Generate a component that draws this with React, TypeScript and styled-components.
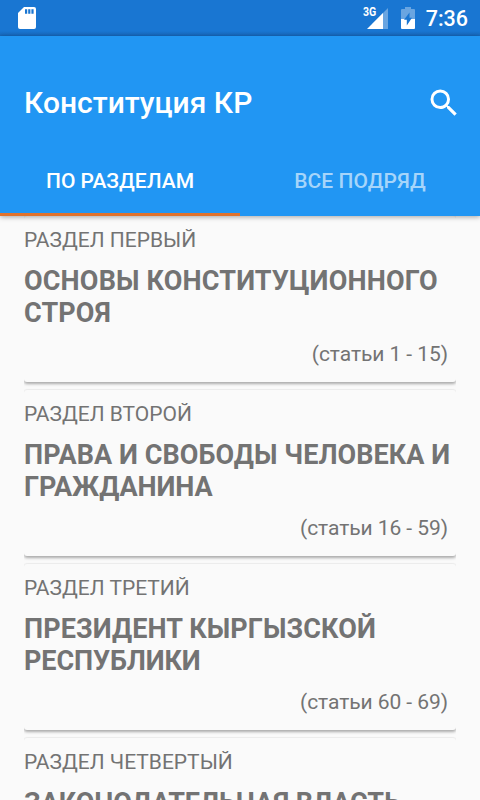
import React from "react";
import styled, { createGlobalStyle } from "styled-components";

const Global = createGlobalStyle`
  * { box-sizing: border-box; }
  html, body { margin: 0; height: 800px; overflow: hidden; background: #fafafa; }
  body { font-family: Roboto, sans-serif; }
`;
const Screen = styled.div`
  width: 480px; height: 800px; display: flex; flex-direction: column; overflow: hidden; background: #fafafa;
`;
const StatusBar = styled.div`
  height: 36px; flex: none; color: #fff;
  background: linear-gradient(#1976d2 0 31px, #1769bd 36px);
  display: flex; align-items: center; justify-content: space-between;
  padding: 0 12px 0 18px;
`;
const StatusGroup = styled.div`
  display: flex; align-items: center; height: 36px;
`;
const Network = styled.span`
  font-size: 12px; font-weight: 700; line-height: 14px; align-self: flex-start; margin: 5px -11px 0 0;
  transform: scale(0.88, 1.08); transform-origin: left center; letter-spacing: -0.1px;
`;
const SignalIcon = styled.svg`
  margin-right: 13px;
`;
const Clock = styled.span`
  font-size: 21.5px; font-weight: 500; line-height: 36px; margin-left: 11px; padding-top: 1px;
`;
const Header = styled.header`
  height: 180px; flex: none; background: #2196f3; color: #fff; box-shadow: 0 1px 5px rgba(0,0,0,.35); z-index: 1;
  display: flex; flex-direction: column;
`;
const Toolbar = styled.div`
  height: 108px; padding: 25px 18px 0 24px; display: flex; align-items: center; justify-content: space-between;
`;
const Title = styled.h1`
  margin: 0; font-size: 30px; font-weight: 500; line-height: 36px;
`;
const Tabs = styled.div`
  display: flex; height: 72px; flex: none;
`;
const Tab = styled.button<{ $active?: boolean }>`
  flex: 1; border: 0; background: none; padding: 5px 0 0; font: 500 21px Roboto, sans-serif;
  color: ${(p) => (p.$active ? "#fff" : "#a6d5fa")};
  letter-spacing: ${(p) => (p.$active ? "0" : "0.07px")};
  border-bottom: 3px solid ${(p) => (p.$active ? "#e0722c" : "transparent")};
`;
const List = styled.main`
  padding: 0 24px; flex: 1; min-height: 0; display: flex; flex-direction: column; gap: 8px;
`;
const Card = styled.article`
  height: 166px; flex: none; padding-top: 10px; color: #737373; border-radius: 3px;
  box-shadow: 0 2px 3px rgba(0,0,0,.32), 0 -1px 1px rgba(0,0,0,.05);
  clip-path: inset(-2px 0 -5px 0);
`;
const Label = styled.div`
  font-size: 21px; line-height: 28px;
`;
const Heading = styled.h2`
  margin: 11px 0 0; font-size: 27px; line-height: 32px; font-weight: 700;
`;
const Line = styled.span<{ $tracking: number }>`
  display: block; white-space: nowrap; letter-spacing: ${(p) => p.$tracking}px;
`;
const Range = styled.div`
  margin: 13px 8px 0 0; font-size: 21px; line-height: 25px; text-align: right; letter-spacing: -0.06px;
`;

type Section = { label: string; lines: [string, number][]; range?: string };

const sections: Section[] = [
  { label: "РАЗДЕЛ ПЕРВЫЙ", lines: [["ОСНОВЫ КОНСТИТУЦИОННОГО", 0.17], ["СТРОЯ", 0.15]], range: "(статьи 1 - 15)" },
  { label: "РАЗДЕЛ ВТОРОЙ", lines: [["ПРАВА И СВОБОДЫ ЧЕЛОВЕКА И", 0.08], ["ГРАЖДАНИНА", -0.1]], range: "(статьи 16 - 59)" },
  { label: "РАЗДЕЛ ТРЕТИЙ", lines: [["ПРЕЗИДЕНТ КЫРГЫЗСКОЙ", 0.1], ["РЕСПУБЛИКИ", -0.1]], range: "(статьи 60 - 69)" },
  { label: "РАЗДЕЛ ЧЕТВЕРТЫЙ", lines: [["ЗАКОНОДАТЕЛЬНАЯ ВЛАСТЬ", -0.05]] },
];

export default function App() {
  return (
    <Screen>
      <Global />
      <StatusBar>
        <StatusGroup>
          <svg width="18" height="22" viewBox="0 0 18 22">
            <path d="M6 0h10a2 2 0 0 1 2 2v18a2 2 0 0 1-2 2H2a2 2 0 0 1-2-2V6z" fill="#fff" />
            <path d="M7 2.2h2.2v4.6H7zM10.2 2.2h2.2v4.6h-2.2zM13.4 2.2h2.2v4.6h-2.2z" fill="#1976d2" />
          </svg>
        </StatusGroup>
        <StatusGroup>
          <Network>3G</Network>
          <SignalIcon width="21" height="21" viewBox="0 0 21 21">
            <path d="M5 16 21 0V21H16z" fill="#fff" fillOpacity=".35" />
            <path d="M0 21 16 5V21z" fill="#fff" />
          </SignalIcon>
          <svg width="14" height="22" viewBox="0 0 14 22">
            <path d="M4 0h6v2h3a1 1 0 0 1 1 1v9H0V3a1 1 0 0 1 1-1h3z" fill="#fff" fillOpacity=".35" />
            <path d="M0 12h14v9a1 1 0 0 1-1 1H1a1 1 0 0 1-1-1z" fill="#fff" />
            <path d="M8.5 5.5v5.3H11L5.8 18.5v-5.8H3z" fill="#1976d2" />
          </svg>
          <Clock>7:36</Clock>
        </StatusGroup>
      </StatusBar>
      <Header>
        <Toolbar>
          <Title>Конституция КР</Title>
          <svg width="36" height="36" viewBox="0 0 24 24" fill="#fff"><path d="M15.5 14h-.79l-.28-.27A6.471 6.471 0 0 0 16 9.5 6.5 6.5 0 1 0 9.5 16c1.61 0 3.09-.59 4.23-1.57l.27.28v.79l5 4.99L20.49 19l-4.99-5zm-6 0C7.01 14 5 11.99 5 9.5S7.01 5 9.5 5 14 7.01 14 9.5 11.99 14 9.5 14z" /></svg>
        </Toolbar>
        <Tabs><Tab $active>ПО РАЗДЕЛАМ</Tab><Tab>ВСЕ ПОДРЯД</Tab></Tabs>
      </Header>
      <List>
        {sections.map((s) => (
          <Card key={s.label}>
            <Label>{s.label}</Label>
            <Heading>{s.lines.map(([text, tracking]) => <Line key={text} $tracking={tracking}>{text}</Line>)}</Heading>
            {s.range && <Range>{s.range}</Range>}
          </Card>
        ))}
      </List>
    </Screen>
  );
}
